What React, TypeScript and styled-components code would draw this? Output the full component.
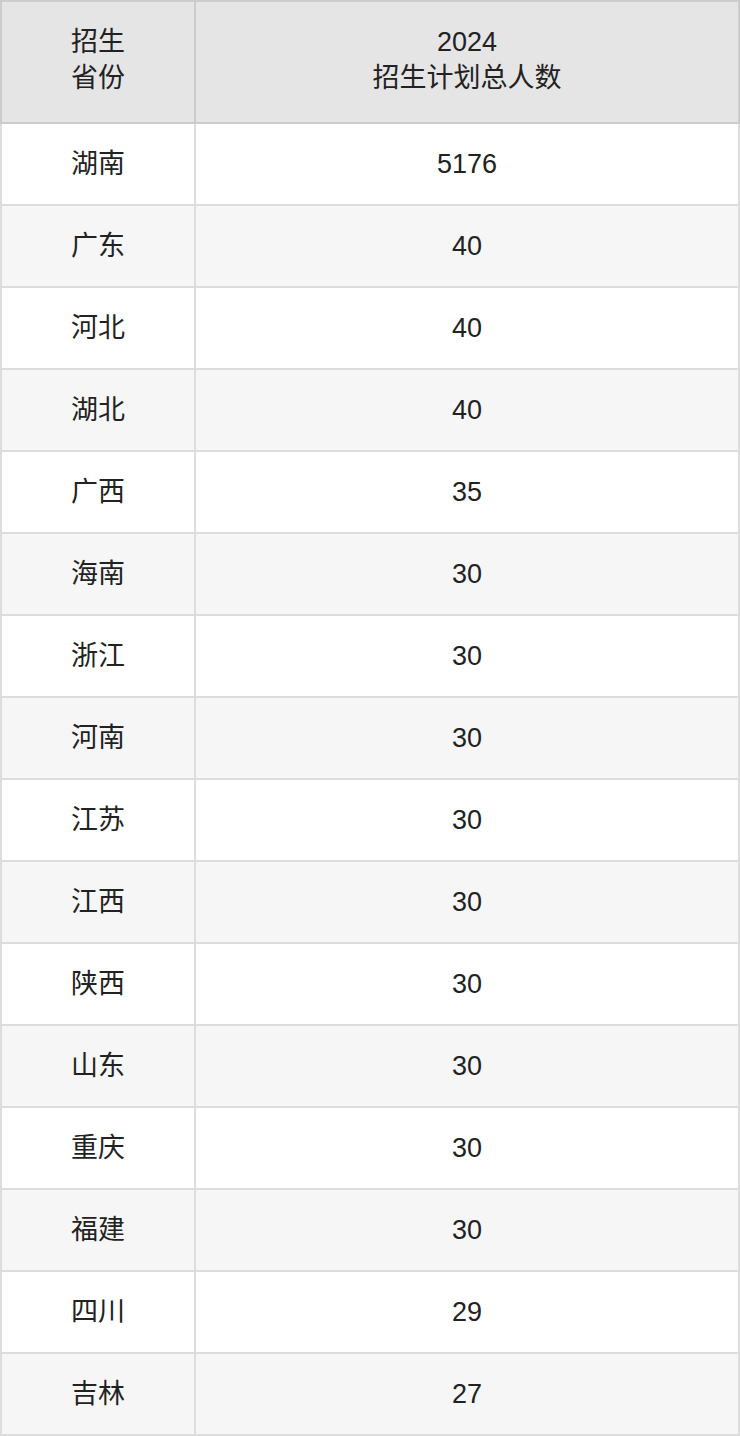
import styled, { createGlobalStyle } from 'styled-components';

const rows: [string, string][] = [
  ['湖南', '5176'],
  ['广东', '40'],
  ['河北', '40'],
  ['湖北', '40'],
  ['广西', '35'],
  ['海南', '30'],
  ['浙江', '30'],
  ['河南', '30'],
  ['江苏', '30'],
  ['江西', '30'],
  ['陕西', '30'],
  ['山东', '30'],
  ['重庆', '30'],
  ['福建', '30'],
  ['四川', '29'],
  ['吉林', '27'],
];

const GlobalStyle = createGlobalStyle`
  html, body {
    margin: 0;
    padding: 0;
    background: #ffffff;
  }
  body {
    font-family: "Liberation Sans", "Noto Sans CJK SC", sans-serif;
    color: #222222;
  }
`;

const Table = styled.table`
  width: 740px;
  border-collapse: collapse;
  table-layout: fixed;
  font-size: 27px;
`;

const HeadCell = styled.th`
  height: 116px;
  padding: 0 8px 4px;
  background: #e5e5e5;
  border: 2px solid #cccccc;
  font-weight: 400;
  line-height: 36px;
  text-align: center;
  vertical-align: middle;
`;

const Row = styled.tr<{ $striped: boolean }>`
  background: ${p => (p.$striped ? '#f6f6f6' : '#ffffff')};
`;

const Cell = styled.td`
  height: 80px;
  padding: 0 8px;
  border: 2px solid #dddddd;
  text-align: center;
  vertical-align: middle;
  line-height: 36px;
`;

const App = () => {
  return (
    <>
      <GlobalStyle />
      <Table>
        <colgroup>
          <col style={{ width: 194 }} />
          <col />
        </colgroup>
        <thead>
          <tr>
            <HeadCell>
              招生
              <br />
              省份
            </HeadCell>
            <HeadCell>
              2024
              <br />
              招生计划总人数
            </HeadCell>
          </tr>
        </thead>
        <tbody>
          {rows.map(([province, total], idx) => (
            <Row key={province} $striped={idx % 2 === 1}>
              <Cell>{province}</Cell>
              <Cell>{total}</Cell>
            </Row>
          ))}
        </tbody>
      </Table>
    </>
  );
};

export default App;
